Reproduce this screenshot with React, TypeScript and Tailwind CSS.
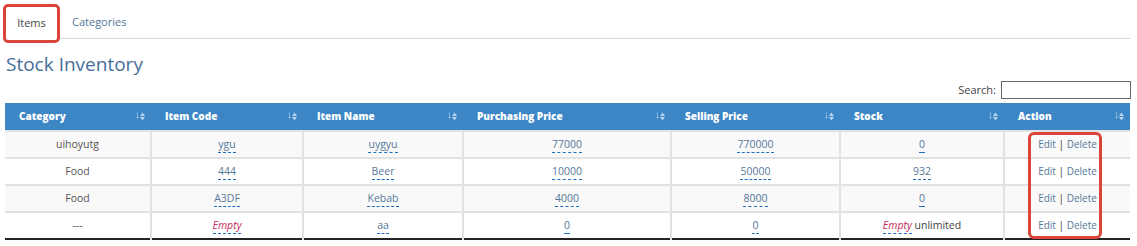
import React from "react";

type Cell = { text: string; link?: boolean; empty?: boolean; suffix?: string };

const columns = [
  { label: "Category", w: "w-[146px]" },
  { label: "Item Code", w: "w-[152px]" },
  { label: "Item Name", w: "w-[160px]" },
  { label: "Purchasing Price", w: "w-[208px]" },
  { label: "Selling Price", w: "w-[169px]" },
  { label: "Stock", w: "w-[164px]" },
  { label: "Action", w: "w-[126px]" },
];

const rows: Cell[][] = [
  [
    { text: "uihoyutg" },
    { text: "ygu", link: true },
    { text: "uygyu", link: true },
    { text: "77000", link: true },
    { text: "770000", link: true },
    { text: "0", link: true },
  ],
  [
    { text: "Food" },
    { text: "444", link: true },
    { text: "Beer", link: true },
    { text: "10000", link: true },
    { text: "50000", link: true },
    { text: "932", link: true },
  ],
  [
    { text: "Food" },
    { text: "A3DF", link: true },
    { text: "Kebab", link: true },
    { text: "4000", link: true },
    { text: "8000", link: true },
    { text: "0", link: true },
  ],
  [
    { text: "---" },
    { text: "Empty", link: true, empty: true },
    { text: "aa", link: true },
    { text: "0", link: true },
    { text: "0", link: true },
    { text: "Empty", link: true, empty: true, suffix: " unlimited" },
  ],
];

function SortIcon() {
  return (
    <svg width="9" height="11" viewBox="0 0 9 11" className="shrink-0">
      <path d="M1.5 1 V7 M0 5.5 L1.5 7.5 L3 5.5" stroke="#9cc2e6" strokeWidth="1" fill="none" opacity="0.7" />
      <path d="M6.5 1.5 L9 5 L4 5 Z" fill="#b9d4ee" />
      <path d="M6.5 9.5 L9 6 L4 6 Z" fill="#b9d4ee" />
    </svg>
  );
}

function Editable({ cell }: { cell: Cell }) {
  if (!cell.link) return <span className="text-[#555]">{cell.text}</span>;
  return (
    <>
      <span
        className={`border-b border-dashed border-[#1b6fc0] pb-[1px] ${
          cell.empty ? "italic text-[#c4285c]" : "text-[#55789a]"
        }`}
      >
        {cell.text}
      </span>
      {cell.suffix && <span className="text-[#444]">{cell.suffix}</span>}
    </>
  );
}

export default function App() {
  return (
    <div className="w-[1137px] h-[246px] bg-white font-['Open_Sans',sans-serif] overflow-hidden">
      {/* tabs */}
      <div className="flex items-start pl-[3px] pr-[7px] pt-[4px]">
        <div className="w-[57px] h-[39px] rounded-[5px] border-[3px] border-[#d9443b] flex items-center justify-center text-[11px] text-[#444]">
          Items
        </div>
        <div className="flex-1 flex items-center h-[35px] border-b border-[#d6d6d6] pl-[12px] pt-[3px] text-[11px] text-[#4f7599]">
          Categories
        </div>
      </div>

      <h2 className="pl-[6px] mt-[9px] text-[19px] leading-[24px] font-medium text-[#466e98]">
        Stock Inventory
      </h2>

      <div className="flex justify-end items-center gap-[5px] pr-[6px] mt-[5px] h-[18px] text-[11px] text-[#444]">
        <span>Search:</span>
        <div className="w-[130px] h-[18px] border border-[#666] bg-white" />
      </div>

      <div className="relative ml-[5px] mt-[4px] w-[1125px]">
        <table className="table-fixed w-[1125px] border-collapse">
          <thead>
            <tr className="bg-[#3d86c6] h-[28px]">
              {columns.map((c) => (
                <th key={c.label} className={`${c.w} p-0 text-left`}>
                  <div className="flex items-center justify-between pl-[14px] pr-[6px] text-[10px] font-extrabold text-white">
                    <span>{c.label}</span>
                    <SortIcon />
                  </div>
                </th>
              ))}
            </tr>
          </thead>
          <tbody className="border-b-2 border-[#222]">
            {rows.map((r, i) => (
              <tr key={i} className={`h-[27px] ${i % 2 === 0 ? "bg-[#f9f9f9]" : "bg-white"}`}>
                {r.map((c, j) => (
                  <td
                    key={j}
                    className="p-0 text-center text-[10.5px] border-t-2 border-l-2 first:border-l-0 border-[#e2e2e2]"
                  >
                    <Editable cell={c} />
                  </td>
                ))}
                <td className="p-0 text-center text-[10px] border-t-2 border-l-2 border-[#e2e2e2] text-[#55789a]">
                  Edit <span className="text-[#333]">|</span> Delete
                </td>
              </tr>
            ))}
          </tbody>
        </table>
        {/* highlight around actions */}
        <div className="absolute left-[1023px] top-[29px] w-[74px] h-[107px] rounded-[6px] border-[3px] border-[#d9443b] pointer-events-none" />
      </div>
    </div>
  );
}
